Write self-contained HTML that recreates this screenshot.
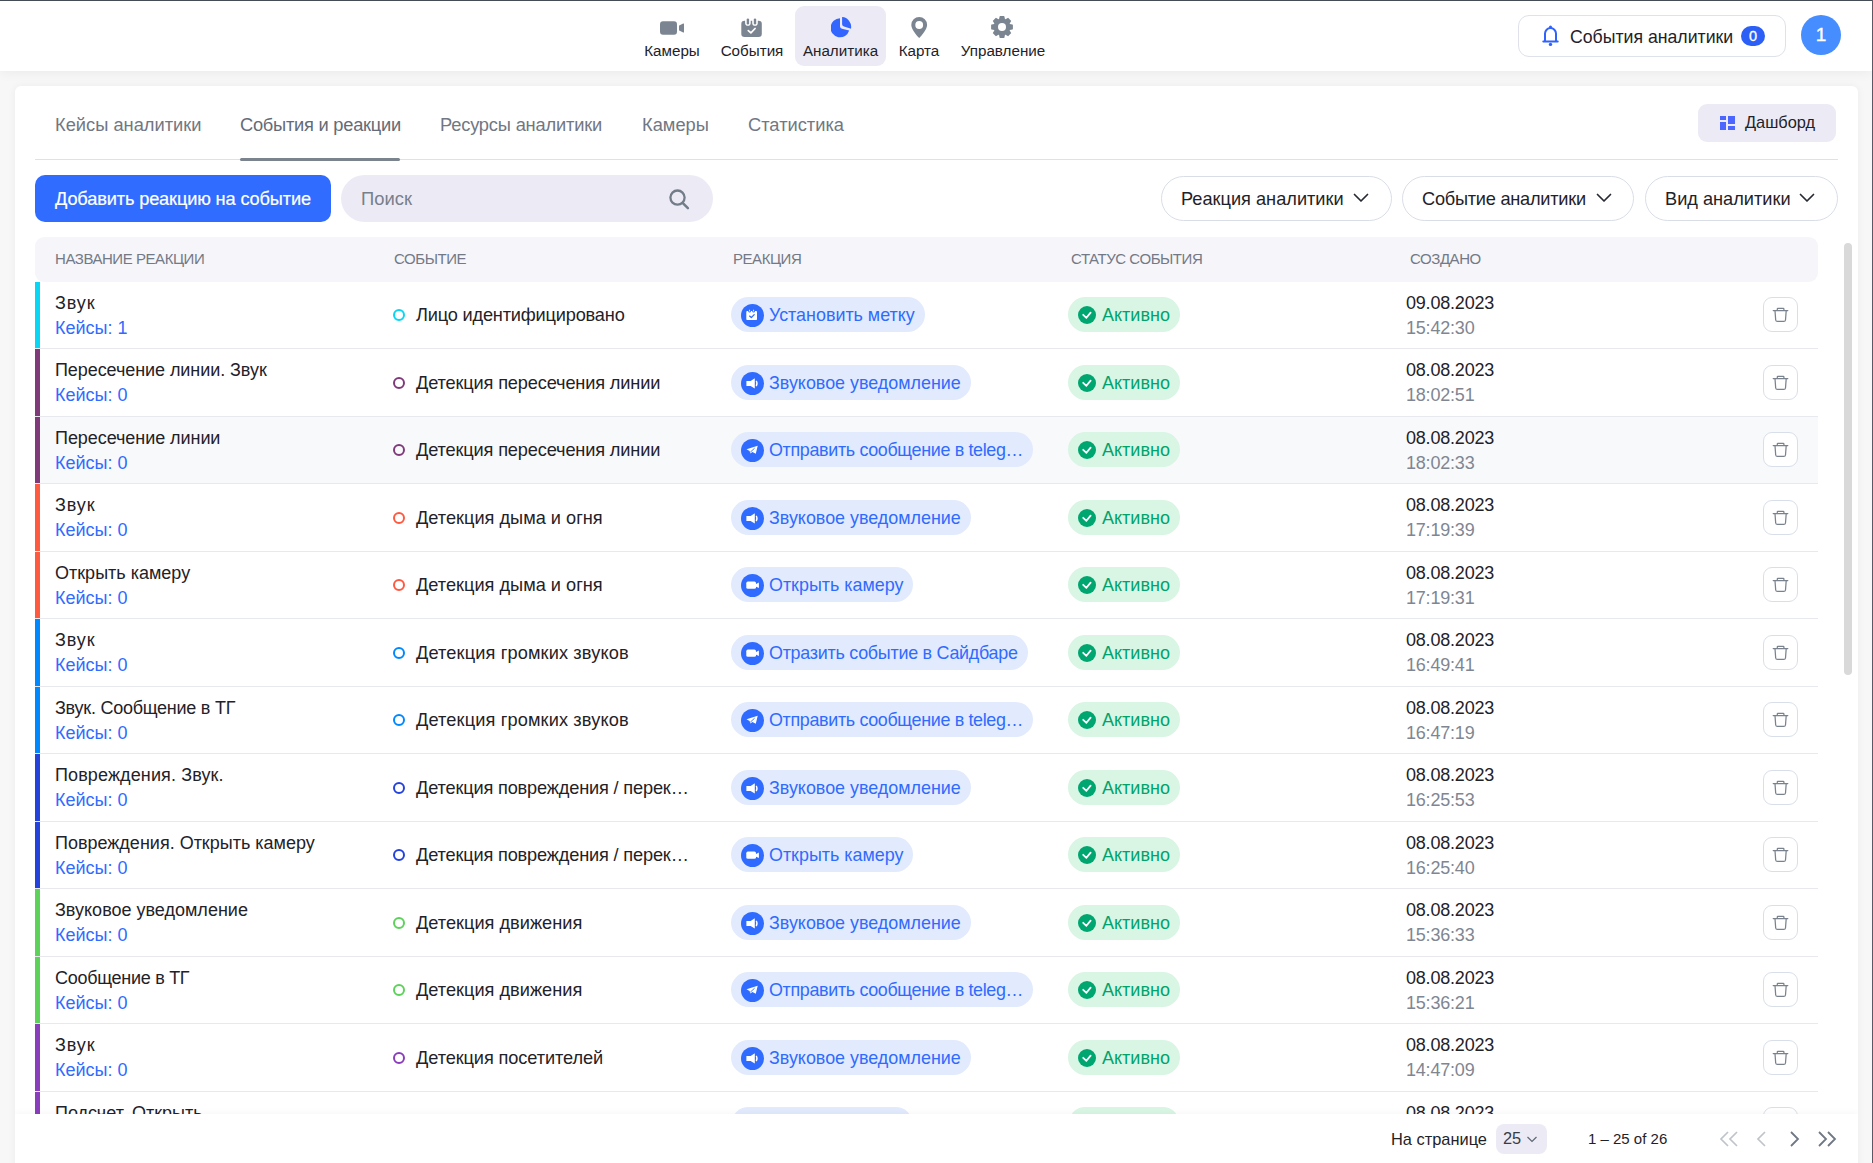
<!DOCTYPE html>
<html><head><meta charset="utf-8">
<style>
*{box-sizing:border-box;margin:0;padding:0}
html,body{width:1873px;height:1163px;overflow:hidden}
body{font-family:"Liberation Sans",sans-serif;background:#f7f7f7;color:#1f2228;position:relative}
.topline{position:absolute;left:0;top:0;width:1873px;height:1px;background:#454c55;z-index:10}
.rightline{position:absolute;right:0;top:0;width:1px;height:1163px;background:#5b5966;z-index:10}
.hdr{position:absolute;left:0;top:0;width:1872px;height:71px;background:#fff;box-shadow:0 1px 12px rgba(0,0,0,.06);z-index:3}
.nav{position:absolute;top:6px;height:60px;border-radius:9px;text-align:center;font-size:15px;color:#1f2228}
.nav svg{position:absolute}
.nav .lb{position:absolute;left:-10px;right:-10px;top:36px;line-height:17px;white-space:nowrap;font-size:15.2px}
.nav.act{background:#ecebf5}
.notif{position:absolute;left:1518px;top:15px;width:268px;height:42px;border:1px solid #dfe2ea;border-radius:11px;background:#fff}
.notif .lb{position:absolute;left:51px;top:11px;font-size:17.7px;line-height:20px;white-space:nowrap}
.badge{position:absolute;left:222px;top:10px;width:24px;height:20px;border-radius:10px;background:#2c5ff5;color:#fff;font-size:14.5px;line-height:20px;text-align:center;-webkit-text-stroke:0.3px #fff}
.avatar{position:absolute;left:1801px;top:15px;width:40px;height:40px;border-radius:50%;background:#468dff;color:#fff;font-size:19px;line-height:40px;text-align:center;-webkit-text-stroke:0.4px #fff}
.card{position:absolute;left:15px;top:86px;width:1843px;height:1090px;background:#fff;border-radius:6px;box-shadow:0 0 8px rgba(0,0,0,.05);overflow:hidden;z-index:1}
.tabs{position:absolute;left:20px;top:0;width:1803px;height:74px;border-bottom:1px solid #dde1ea}
.tab{position:absolute;top:29px;font-size:18.3px;line-height:20px;color:#717783;white-space:nowrap}
.tab.act{color:#646b77}
.uline{position:absolute;left:205px;top:72px;width:160px;height:3px;border-radius:2px;background:#7a838e}
.dash{position:absolute;left:1663px;top:18px;width:138px;height:38px;border-radius:9px;background:#ecebf5}
.dash .lb{position:absolute;left:47px;top:9px;font-size:16.4px;line-height:19px;color:#1f2228}
.addbtn{position:absolute;left:20px;top:89px;width:296px;height:47px;border-radius:10px;background:#2f6cff;color:#fff;font-size:18.2px;line-height:49px;padding-left:20px;-webkit-text-stroke:0.2px #fff;letter-spacing:-0.14px}
.search{position:absolute;left:326px;top:89px;width:372px;height:47px;border-radius:24px;background:#ecebf5}
.search .lb{position:absolute;left:20px;top:14px;font-size:18.4px;line-height:20px;color:#77808b}
.pill{position:absolute;top:90px;height:45px;border:1px solid #d9dde6;border-radius:23px;background:#fff}
.pill .lb{position:absolute;left:19px;top:12px;font-size:18.2px;line-height:20px;white-space:nowrap;color:#1f2228}
.pill svg{position:absolute;top:14px}
.thead{position:absolute;left:20px;top:151px;width:1783px;height:45px;border-radius:9px;background:#f6f5fa}
.th{position:absolute;top:13px;font-size:15px;letter-spacing:-0.45px;line-height:17px;color:#737985;white-space:nowrap}
.tbody{position:absolute;left:20px;top:196px;width:1783px}
.row{position:relative;height:67px;border-bottom:1px solid #e8e9ef;background:#fff}
.row.ev{height:68px}
.row.ev .c3,.row.ev .c4,.row.ev .del{top:16px}
.row.ev .c1,.row.ev .c5{top:9px}
.row.ev .c2{top:23px}
.row.hover{background:#f8f9fb}
.bar{position:absolute;left:0;top:0;bottom:0;width:5px}
.c1{position:absolute;left:20px;top:9px;font-size:18px;line-height:25px;white-space:nowrap}
.cs{color:#2f6bff}
.c2{position:absolute;left:358px;top:22px;font-size:18.2px;line-height:22px;white-space:nowrap}
.dot{display:inline-block;width:12px;height:12px;border-radius:50%;border:2px solid;vertical-align:top;margin-top:5px;margin-right:11px}
.c3{position:absolute;left:696px;top:15px}
.chip{display:inline-block;height:35px;border-radius:17.5px;background:#e2eafd;color:#2f6bff;font-size:17.9px;line-height:35px;padding:0 10px 0 10px;white-space:nowrap}
.chip .ci{vertical-align:top;margin-top:6.5px;margin-right:5px}
.chip>span,.st>span{position:relative;top:1px}
.c4{position:absolute;left:1033px;top:15px}
.tgx{letter-spacing:-0.33px}
.st{display:inline-block;height:35px;border-radius:17.5px;background:#d9f5e3;color:#00a36d;font-size:18px;line-height:35px;padding:0 10px 0 10px;white-space:nowrap}
.st svg{vertical-align:top;margin-top:8.5px;margin-right:6px}
.c5{position:absolute;left:1371px;top:9px;font-size:18px;line-height:25px;letter-spacing:-0.2px}
.tm{color:#7f8692}
.del{position:absolute;left:1728px;top:15px;width:35px;height:35px;border:1px solid #d9dfe8;border-radius:9px;background:#fff}
.del svg{position:absolute;left:8px;top:8px}
.foot{position:absolute;left:0;top:1028px;width:1843px;height:62px;background:#fff;box-shadow:0 -2px 6px rgba(0,0,0,.03);z-index:2}
.foot .t{position:absolute;font-size:16.4px;line-height:18px;white-space:nowrap;color:#1f2228}
.sel{position:absolute;left:1481px;top:10px;width:51px;height:30px;border-radius:8px;background:#ecebf5}
.scroll{position:absolute;left:1829px;top:157px;width:8px;height:432px;border-radius:4px;background:#d9d9d9;z-index:3}
</style></head><body>
<div class="topline"></div><div class="rightline"></div>
<div class="hdr">
  <div class="nav" style="left:640px;width:64px">
    <svg style="left:20px;top:15px" width="25" height="15" viewBox="0 0 25 15"><rect x="0" y="0.2" width="17" height="13.6" rx="3" fill="#7b8592"/><path d="M19.2 4.6L23.2 2.5Q24 2.1 24 3v8Q24 11.9 23.2 11.5L19.2 9.6Q19 9.5 19 9.2V4.9Q19 4.7 19.2 4.6z" fill="#7b8592"/></svg>
    <div class="lb">Камеры</div></div>
  <div class="nav" style="left:716px;width:72px">
    <svg style="left:25px;top:12px" width="21" height="20" viewBox="0 0 21 20"><rect x="0.3" y="2.8" width="20.5" height="16.2" rx="3.2" fill="#7b8592"/><rect x="4.1" y="-2" width="5.6" height="9.7" rx="2.8" fill="#fff"/><rect x="11.2" y="-2" width="5.6" height="9.7" rx="2.8" fill="#fff"/><rect x="5.7" y="0.4" width="2.4" height="6" rx="1.2" fill="#7b8592"/><rect x="12.8" y="0.4" width="2.4" height="6" rx="1.2" fill="#7b8592"/><path d="M7.3 12.6l2.6 2.3 4.2-4.4" stroke="#fff" stroke-width="1.7" fill="none" stroke-linecap="round" stroke-linejoin="round"/></svg>
    <div class="lb">События</div></div>
  <div class="nav act" style="left:795px;width:91px">
    <svg style="left:36px;top:11px" width="21" height="22" viewBox="0 0 21 22"><path d="M9 1.3V9.4Q9.2 11.2 11 11.8L18.2 13.5A9.5 9.5 0 1 1 9 1.3z" fill="#3366ff"/><path d="M11.1 0.1A9.8 9.8 0 0 1 20 11.7L13 9.6Q11.2 9.1 11.1 7.3z" fill="#3366ff"/></svg>
    <div class="lb">Аналитика</div></div>
  <div class="nav" style="left:893px;width:52px">
    <svg style="left:18px;top:11px" width="17" height="22" viewBox="0 0 17 22"><path d="M8.2 0A7.9 7.9 0 0 1 16.1 7.9C16.1 12 11.4 17.6 8.2 21.1C5 17.6 0.3 12 0.3 7.9A7.9 7.9 0 0 1 8.2 0z" fill="#7b8592"/><circle cx="8.2" cy="8" r="3.9" fill="#fff"/></svg>
    <div class="lb">Карта</div></div>
  <div class="nav" style="left:958px;width:90px">
    <svg style="left:32px;top:9px" width="24" height="24" viewBox="0 0 24 24"><g fill="#7b8592"><circle cx="12" cy="12" r="8.2"/><path d="M10.1 1.1H13.9Q14.3 1.1 14.4 1.6L15.3 5.5H8.7L9.6 1.6Q9.7 1.1 10.1 1.1z" transform="rotate(0 12 12)"/><path d="M10.1 1.1H13.9Q14.3 1.1 14.4 1.6L15.3 5.5H8.7L9.6 1.6Q9.7 1.1 10.1 1.1z" transform="rotate(45 12 12)"/><path d="M10.1 1.1H13.9Q14.3 1.1 14.4 1.6L15.3 5.5H8.7L9.6 1.6Q9.7 1.1 10.1 1.1z" transform="rotate(90 12 12)"/><path d="M10.1 1.1H13.9Q14.3 1.1 14.4 1.6L15.3 5.5H8.7L9.6 1.6Q9.7 1.1 10.1 1.1z" transform="rotate(135 12 12)"/><path d="M10.1 1.1H13.9Q14.3 1.1 14.4 1.6L15.3 5.5H8.7L9.6 1.6Q9.7 1.1 10.1 1.1z" transform="rotate(180 12 12)"/><path d="M10.1 1.1H13.9Q14.3 1.1 14.4 1.6L15.3 5.5H8.7L9.6 1.6Q9.7 1.1 10.1 1.1z" transform="rotate(225 12 12)"/><path d="M10.1 1.1H13.9Q14.3 1.1 14.4 1.6L15.3 5.5H8.7L9.6 1.6Q9.7 1.1 10.1 1.1z" transform="rotate(270 12 12)"/><path d="M10.1 1.1H13.9Q14.3 1.1 14.4 1.6L15.3 5.5H8.7L9.6 1.6Q9.7 1.1 10.1 1.1z" transform="rotate(315 12 12)"/></g><circle cx="12" cy="12" r="4" fill="#fff"/></svg>
    <div class="lb">Управление</div></div>
  <div class="notif">
    <svg style="position:absolute;left:23px;top:8px" width="18" height="23" viewBox="0 0 18 23"><path d="M1.3 17.5H15.7M3 17.5V9.6A5.5 5.5 0 0 1 14 9.6V17.5" stroke="#2f63ff" stroke-width="2" fill="none" stroke-linecap="round" stroke-linejoin="round"/><circle cx="8.5" cy="2.9" r="1.5" fill="#2f63ff"/><circle cx="8.5" cy="20.4" r="1.7" fill="#2f63ff"/></svg>
    <div class="lb">События аналитики</div>
    <div class="badge">0</div>
  </div>
  <div class="avatar">1</div>
</div>

<div class="card">
  <div class="tabs">
    <div class="tab" style="left:20px">Кейсы аналитики</div>
    <div class="tab act" style="left:205px;letter-spacing:-0.25px">События и реакции</div>
    <div class="tab" style="left:405px;letter-spacing:-0.19px">Ресурсы аналитики</div>
    <div class="tab" style="left:607px">Камеры</div>
    <div class="tab" style="left:713px">Статистика</div>
    <div class="uline"></div>
    <div class="dash">
      <svg style="position:absolute;left:22px;top:12px" width="15" height="14" viewBox="0 0 15 14"><rect x="0" y="0" width="6" height="4" fill="#4a66ff"/><rect x="0" y="6" width="6" height="8" fill="#4a66ff"/><rect x="8" y="0" width="7" height="8" fill="#4a66ff"/><rect x="8" y="10" width="7" height="4" fill="#4a66ff"/></svg>
      <div class="lb">Дашборд</div>
    </div>
  </div>
  <div class="addbtn">Добавить реакцию на событие</div>
  <div class="search"><div class="lb">Поиск</div>
    <svg style="position:absolute;left:326px;top:13px" width="24" height="24" viewBox="0 0 24 24"><circle cx="10.5" cy="9.6" r="7.1" stroke="#737d89" stroke-width="2.3" fill="none"/><path d="M15.6 14.8l5.3 5.3" stroke="#737d89" stroke-width="2.5" stroke-linecap="round"/></svg>
  </div>
  <div class="pill" style="left:1146px;width:231px"><div class="lb">Реакция аналитики</div>
    <svg style="left:190px" width="18" height="14" viewBox="0 0 18 14"><path d="M2.5 3.5L9 10L15.5 3.5" stroke="#262a32" stroke-width="1.7" fill="none" stroke-linecap="round" stroke-linejoin="round"/></svg></div>
  <div class="pill" style="left:1387px;width:232px"><div class="lb" style="letter-spacing:-0.25px">Событие аналитики</div>
    <svg style="left:192px" width="18" height="14" viewBox="0 0 18 14"><path d="M2.5 3.5L9 10L15.5 3.5" stroke="#262a32" stroke-width="1.7" fill="none" stroke-linecap="round" stroke-linejoin="round"/></svg></div>
  <div class="pill" style="left:1630px;width:193px"><div class="lb">Вид аналитики</div>
    <svg style="left:152px" width="18" height="14" viewBox="0 0 18 14"><path d="M2.5 3.5L9 10L15.5 3.5" stroke="#262a32" stroke-width="1.7" fill="none" stroke-linecap="round" stroke-linejoin="round"/></svg></div>

  <div class="thead">
    <div class="th" style="left:20px">НАЗВАНИЕ РЕАКЦИИ</div>
    <div class="th" style="left:359px">СОБЫТИЕ</div>
    <div class="th" style="left:698px">РЕАКЦИЯ</div>
    <div class="th" style="left:1036px">СТАТУС СОБЫТИЯ</div>
    <div class="th" style="left:1375px">СОЗДАНО</div>
  </div>
  <div class="tbody">
<div class="row"><div class="bar" style="background:#08d6f3"></div>
<div class="c1"><div class="nm" style="letter-spacing:0.9px">Звук</div><div class="cs">Кейсы: 1</div></div>
<div class="c2"><span class="dot" style="border-color:#08d6f3"></span><span class="ev" style="letter-spacing:-0.19px">Лицо идентифицировано</span></div>
<div class="c3"><span class="chip"><svg class="ci" width="23" height="23" viewBox="0 0 23 23"><circle cx="11.5" cy="11.5" r="11.5" fill="#2f6bff"/><rect x="5.3" y="7.1" width="10.7" height="9" rx="0.8" fill="#fff"/><rect x="7.3" y="5" width="2.6" height="3.6" rx="1.3" fill="#2f6bff"/><rect x="11.3" y="5" width="2.6" height="3.6" rx="1.3" fill="#2f6bff"/><rect x="8.2" y="5.6" width="0.9" height="2" rx="0.45" fill="#fff"/><rect x="12.2" y="5.6" width="0.9" height="2" rx="0.45" fill="#fff"/><path d="M8.6 12.1l1.7 1.5 2.9-3" stroke="#2f6bff" stroke-width="1.3" fill="none" stroke-linecap="round" stroke-linejoin="round"/></svg><span>Установить метку</span></span></div>
<div class="c4"><span class="st"><svg width="18" height="18" viewBox="0 0 18 18"><circle cx="9" cy="9" r="9" fill="#00a670"/><path d="M5.2 8.8l3.2 3 4.2-5.2" stroke="#fff" stroke-width="1.8" fill="none" stroke-linecap="round" stroke-linejoin="round"/></svg><span>Активно</span></span></div>
<div class="c5"><div class="dt">09.08.2023</div><div class="tm">15:42:30</div></div>
<div class="del"><svg width="18" height="18" viewBox="0 0 18 18"><path d="M1.2 4.6H15.8M5.3 4.5V3Q5.3 2.4 5.9 2.4H11.3Q11.9 2.4 11.9 3V4.5M3 4.8L3.7 14Q3.9 15.4 5.4 15.4H11.8Q13.3 15.4 13.5 14L14.2 4.8" stroke="#7a828e" stroke-width="1.25" fill="none" stroke-linejoin="round" stroke-linecap="round"/></svg></div>
</div>
<div class="row ev"><div class="bar" style="background:#7f3a7a"></div>
<div class="c1"><div class="nm" style="letter-spacing:-0.07px">Пересечение линии. Звук</div><div class="cs">Кейсы: 0</div></div>
<div class="c2"><span class="dot" style="border-color:#7f3a7a"></span><span class="ev" style="letter-spacing:-0.15px">Детекция пересечения линии</span></div>
<div class="c3"><span class="chip"><svg class="ci" width="23" height="23" viewBox="0 0 23 23"><circle cx="11.5" cy="11.5" r="11.5" fill="#2f6bff"/><path d="M5.4 9H9.6L13.8 6.2V16.6L9.6 13.9H5.4z" fill="#fff"/><path d="M15.2 8.9q1.7 2.6 0 5.2" stroke="#fff" stroke-width="1.3" fill="none"/></svg><span>Звуковое уведомление</span></span></div>
<div class="c4"><span class="st"><svg width="18" height="18" viewBox="0 0 18 18"><circle cx="9" cy="9" r="9" fill="#00a670"/><path d="M5.2 8.8l3.2 3 4.2-5.2" stroke="#fff" stroke-width="1.8" fill="none" stroke-linecap="round" stroke-linejoin="round"/></svg><span>Активно</span></span></div>
<div class="c5"><div class="dt">08.08.2023</div><div class="tm">18:02:51</div></div>
<div class="del"><svg width="18" height="18" viewBox="0 0 18 18"><path d="M1.2 4.6H15.8M5.3 4.5V3Q5.3 2.4 5.9 2.4H11.3Q11.9 2.4 11.9 3V4.5M3 4.8L3.7 14Q3.9 15.4 5.4 15.4H11.8Q13.3 15.4 13.5 14L14.2 4.8" stroke="#7a828e" stroke-width="1.25" fill="none" stroke-linejoin="round" stroke-linecap="round"/></svg></div>
</div>
<div class="row hover"><div class="bar" style="background:#7f3a7a"></div>
<div class="c1"><div class="nm" style="letter-spacing:-0.06px">Пересечение линии</div><div class="cs">Кейсы: 0</div></div>
<div class="c2"><span class="dot" style="border-color:#7f3a7a"></span><span class="ev" style="letter-spacing:-0.15px">Детекция пересечения линии</span></div>
<div class="c3"><span class="chip"><svg class="ci" width="23" height="23" viewBox="0 0 23 23"><circle cx="11.5" cy="11.5" r="11.5" fill="#2f6bff"/><path d="M5.5 10.2L16.7 6.7L14.8 14.7L11.4 13.1L9.3 14.6L8.6 12z" fill="#fff"/><path d="M9.3 13.2L13.6 9.2" stroke="#2f6bff" stroke-width="0.9"/></svg><span class="tgx">Отправить сообщение в teleg…</span></span></div>
<div class="c4"><span class="st"><svg width="18" height="18" viewBox="0 0 18 18"><circle cx="9" cy="9" r="9" fill="#00a670"/><path d="M5.2 8.8l3.2 3 4.2-5.2" stroke="#fff" stroke-width="1.8" fill="none" stroke-linecap="round" stroke-linejoin="round"/></svg><span>Активно</span></span></div>
<div class="c5"><div class="dt">08.08.2023</div><div class="tm">18:02:33</div></div>
<div class="del"><svg width="18" height="18" viewBox="0 0 18 18"><path d="M1.2 4.6H15.8M5.3 4.5V3Q5.3 2.4 5.9 2.4H11.3Q11.9 2.4 11.9 3V4.5M3 4.8L3.7 14Q3.9 15.4 5.4 15.4H11.8Q13.3 15.4 13.5 14L14.2 4.8" stroke="#7a828e" stroke-width="1.25" fill="none" stroke-linejoin="round" stroke-linecap="round"/></svg></div>
</div>
<div class="row ev"><div class="bar" style="background:#ff5940"></div>
<div class="c1"><div class="nm" style="letter-spacing:0.9px">Звук</div><div class="cs">Кейсы: 0</div></div>
<div class="c2"><span class="dot" style="border-color:#ff5940"></span><span class="ev">Детекция дыма и огня</span></div>
<div class="c3"><span class="chip"><svg class="ci" width="23" height="23" viewBox="0 0 23 23"><circle cx="11.5" cy="11.5" r="11.5" fill="#2f6bff"/><path d="M5.4 9H9.6L13.8 6.2V16.6L9.6 13.9H5.4z" fill="#fff"/><path d="M15.2 8.9q1.7 2.6 0 5.2" stroke="#fff" stroke-width="1.3" fill="none"/></svg><span>Звуковое уведомление</span></span></div>
<div class="c4"><span class="st"><svg width="18" height="18" viewBox="0 0 18 18"><circle cx="9" cy="9" r="9" fill="#00a670"/><path d="M5.2 8.8l3.2 3 4.2-5.2" stroke="#fff" stroke-width="1.8" fill="none" stroke-linecap="round" stroke-linejoin="round"/></svg><span>Активно</span></span></div>
<div class="c5"><div class="dt">08.08.2023</div><div class="tm">17:19:39</div></div>
<div class="del"><svg width="18" height="18" viewBox="0 0 18 18"><path d="M1.2 4.6H15.8M5.3 4.5V3Q5.3 2.4 5.9 2.4H11.3Q11.9 2.4 11.9 3V4.5M3 4.8L3.7 14Q3.9 15.4 5.4 15.4H11.8Q13.3 15.4 13.5 14L14.2 4.8" stroke="#7a828e" stroke-width="1.25" fill="none" stroke-linejoin="round" stroke-linecap="round"/></svg></div>
</div>
<div class="row"><div class="bar" style="background:#ff5940"></div>
<div class="c1"><div class="nm">Открыть камеру</div><div class="cs">Кейсы: 0</div></div>
<div class="c2"><span class="dot" style="border-color:#ff5940"></span><span class="ev">Детекция дыма и огня</span></div>
<div class="c3"><span class="chip"><svg class="ci" width="23" height="23" viewBox="0 0 23 23"><circle cx="11.5" cy="11.5" r="11.5" fill="#2f6bff"/><rect x="5.3" y="7.6" width="9.7" height="7.2" rx="1.6" fill="#fff"/><path d="M14.6 10.2L17.9 8.6V13.9L14.6 12.4z" fill="#fff"/></svg><span>Открыть камеру</span></span></div>
<div class="c4"><span class="st"><svg width="18" height="18" viewBox="0 0 18 18"><circle cx="9" cy="9" r="9" fill="#00a670"/><path d="M5.2 8.8l3.2 3 4.2-5.2" stroke="#fff" stroke-width="1.8" fill="none" stroke-linecap="round" stroke-linejoin="round"/></svg><span>Активно</span></span></div>
<div class="c5"><div class="dt">08.08.2023</div><div class="tm">17:19:31</div></div>
<div class="del"><svg width="18" height="18" viewBox="0 0 18 18"><path d="M1.2 4.6H15.8M5.3 4.5V3Q5.3 2.4 5.9 2.4H11.3Q11.9 2.4 11.9 3V4.5M3 4.8L3.7 14Q3.9 15.4 5.4 15.4H11.8Q13.3 15.4 13.5 14L14.2 4.8" stroke="#7a828e" stroke-width="1.25" fill="none" stroke-linejoin="round" stroke-linecap="round"/></svg></div>
</div>
<div class="row ev"><div class="bar" style="background:#0088ff"></div>
<div class="c1"><div class="nm" style="letter-spacing:0.9px">Звук</div><div class="cs">Кейсы: 0</div></div>
<div class="c2"><span class="dot" style="border-color:#0088ff"></span><span class="ev" style="letter-spacing:0.13px">Детекция громких звуков</span></div>
<div class="c3"><span class="chip"><svg class="ci" width="23" height="23" viewBox="0 0 23 23"><circle cx="11.5" cy="11.5" r="11.5" fill="#2f6bff"/><rect x="5.3" y="7.6" width="9.7" height="7.2" rx="1.6" fill="#fff"/><path d="M14.6 10.2L17.9 8.6V13.9L14.6 12.4z" fill="#fff"/></svg><span style="letter-spacing:-0.25px">Отразить событие в Сайдбаре</span></span></div>
<div class="c4"><span class="st"><svg width="18" height="18" viewBox="0 0 18 18"><circle cx="9" cy="9" r="9" fill="#00a670"/><path d="M5.2 8.8l3.2 3 4.2-5.2" stroke="#fff" stroke-width="1.8" fill="none" stroke-linecap="round" stroke-linejoin="round"/></svg><span>Активно</span></span></div>
<div class="c5"><div class="dt">08.08.2023</div><div class="tm">16:49:41</div></div>
<div class="del"><svg width="18" height="18" viewBox="0 0 18 18"><path d="M1.2 4.6H15.8M5.3 4.5V3Q5.3 2.4 5.9 2.4H11.3Q11.9 2.4 11.9 3V4.5M3 4.8L3.7 14Q3.9 15.4 5.4 15.4H11.8Q13.3 15.4 13.5 14L14.2 4.8" stroke="#7a828e" stroke-width="1.25" fill="none" stroke-linejoin="round" stroke-linecap="round"/></svg></div>
</div>
<div class="row"><div class="bar" style="background:#0088ff"></div>
<div class="c1"><div class="nm" style="letter-spacing:-0.25px">Звук. Сообщение в ТГ</div><div class="cs">Кейсы: 0</div></div>
<div class="c2"><span class="dot" style="border-color:#0088ff"></span><span class="ev" style="letter-spacing:0.13px">Детекция громких звуков</span></div>
<div class="c3"><span class="chip"><svg class="ci" width="23" height="23" viewBox="0 0 23 23"><circle cx="11.5" cy="11.5" r="11.5" fill="#2f6bff"/><path d="M5.5 10.2L16.7 6.7L14.8 14.7L11.4 13.1L9.3 14.6L8.6 12z" fill="#fff"/><path d="M9.3 13.2L13.6 9.2" stroke="#2f6bff" stroke-width="0.9"/></svg><span class="tgx">Отправить сообщение в teleg…</span></span></div>
<div class="c4"><span class="st"><svg width="18" height="18" viewBox="0 0 18 18"><circle cx="9" cy="9" r="9" fill="#00a670"/><path d="M5.2 8.8l3.2 3 4.2-5.2" stroke="#fff" stroke-width="1.8" fill="none" stroke-linecap="round" stroke-linejoin="round"/></svg><span>Активно</span></span></div>
<div class="c5"><div class="dt">08.08.2023</div><div class="tm">16:47:19</div></div>
<div class="del"><svg width="18" height="18" viewBox="0 0 18 18"><path d="M1.2 4.6H15.8M5.3 4.5V3Q5.3 2.4 5.9 2.4H11.3Q11.9 2.4 11.9 3V4.5M3 4.8L3.7 14Q3.9 15.4 5.4 15.4H11.8Q13.3 15.4 13.5 14L14.2 4.8" stroke="#7a828e" stroke-width="1.25" fill="none" stroke-linejoin="round" stroke-linecap="round"/></svg></div>
</div>
<div class="row ev"><div class="bar" style="background:#2443dd"></div>
<div class="c1"><div class="nm" style="letter-spacing:0.12px">Повреждения. Звук.</div><div class="cs">Кейсы: 0</div></div>
<div class="c2"><span class="dot" style="border-color:#2443dd"></span><span class="ev" style="letter-spacing:-0.17px">Детекция повреждения / перек…</span></div>
<div class="c3"><span class="chip"><svg class="ci" width="23" height="23" viewBox="0 0 23 23"><circle cx="11.5" cy="11.5" r="11.5" fill="#2f6bff"/><path d="M5.4 9H9.6L13.8 6.2V16.6L9.6 13.9H5.4z" fill="#fff"/><path d="M15.2 8.9q1.7 2.6 0 5.2" stroke="#fff" stroke-width="1.3" fill="none"/></svg><span>Звуковое уведомление</span></span></div>
<div class="c4"><span class="st"><svg width="18" height="18" viewBox="0 0 18 18"><circle cx="9" cy="9" r="9" fill="#00a670"/><path d="M5.2 8.8l3.2 3 4.2-5.2" stroke="#fff" stroke-width="1.8" fill="none" stroke-linecap="round" stroke-linejoin="round"/></svg><span>Активно</span></span></div>
<div class="c5"><div class="dt">08.08.2023</div><div class="tm">16:25:53</div></div>
<div class="del"><svg width="18" height="18" viewBox="0 0 18 18"><path d="M1.2 4.6H15.8M5.3 4.5V3Q5.3 2.4 5.9 2.4H11.3Q11.9 2.4 11.9 3V4.5M3 4.8L3.7 14Q3.9 15.4 5.4 15.4H11.8Q13.3 15.4 13.5 14L14.2 4.8" stroke="#7a828e" stroke-width="1.25" fill="none" stroke-linejoin="round" stroke-linecap="round"/></svg></div>
</div>
<div class="row"><div class="bar" style="background:#2443dd"></div>
<div class="c1"><div class="nm">Повреждения. Открыть камеру</div><div class="cs">Кейсы: 0</div></div>
<div class="c2"><span class="dot" style="border-color:#2443dd"></span><span class="ev" style="letter-spacing:-0.17px">Детекция повреждения / перек…</span></div>
<div class="c3"><span class="chip"><svg class="ci" width="23" height="23" viewBox="0 0 23 23"><circle cx="11.5" cy="11.5" r="11.5" fill="#2f6bff"/><rect x="5.3" y="7.6" width="9.7" height="7.2" rx="1.6" fill="#fff"/><path d="M14.6 10.2L17.9 8.6V13.9L14.6 12.4z" fill="#fff"/></svg><span>Открыть камеру</span></span></div>
<div class="c4"><span class="st"><svg width="18" height="18" viewBox="0 0 18 18"><circle cx="9" cy="9" r="9" fill="#00a670"/><path d="M5.2 8.8l3.2 3 4.2-5.2" stroke="#fff" stroke-width="1.8" fill="none" stroke-linecap="round" stroke-linejoin="round"/></svg><span>Активно</span></span></div>
<div class="c5"><div class="dt">08.08.2023</div><div class="tm">16:25:40</div></div>
<div class="del"><svg width="18" height="18" viewBox="0 0 18 18"><path d="M1.2 4.6H15.8M5.3 4.5V3Q5.3 2.4 5.9 2.4H11.3Q11.9 2.4 11.9 3V4.5M3 4.8L3.7 14Q3.9 15.4 5.4 15.4H11.8Q13.3 15.4 13.5 14L14.2 4.8" stroke="#7a828e" stroke-width="1.25" fill="none" stroke-linejoin="round" stroke-linecap="round"/></svg></div>
</div>
<div class="row ev"><div class="bar" style="background:#5cd25a"></div>
<div class="c1"><div class="nm">Звуковое уведомление</div><div class="cs">Кейсы: 0</div></div>
<div class="c2"><span class="dot" style="border-color:#5cd25a"></span><span class="ev">Детекция движения</span></div>
<div class="c3"><span class="chip"><svg class="ci" width="23" height="23" viewBox="0 0 23 23"><circle cx="11.5" cy="11.5" r="11.5" fill="#2f6bff"/><path d="M5.4 9H9.6L13.8 6.2V16.6L9.6 13.9H5.4z" fill="#fff"/><path d="M15.2 8.9q1.7 2.6 0 5.2" stroke="#fff" stroke-width="1.3" fill="none"/></svg><span>Звуковое уведомление</span></span></div>
<div class="c4"><span class="st"><svg width="18" height="18" viewBox="0 0 18 18"><circle cx="9" cy="9" r="9" fill="#00a670"/><path d="M5.2 8.8l3.2 3 4.2-5.2" stroke="#fff" stroke-width="1.8" fill="none" stroke-linecap="round" stroke-linejoin="round"/></svg><span>Активно</span></span></div>
<div class="c5"><div class="dt">08.08.2023</div><div class="tm">15:36:33</div></div>
<div class="del"><svg width="18" height="18" viewBox="0 0 18 18"><path d="M1.2 4.6H15.8M5.3 4.5V3Q5.3 2.4 5.9 2.4H11.3Q11.9 2.4 11.9 3V4.5M3 4.8L3.7 14Q3.9 15.4 5.4 15.4H11.8Q13.3 15.4 13.5 14L14.2 4.8" stroke="#7a828e" stroke-width="1.25" fill="none" stroke-linejoin="round" stroke-linecap="round"/></svg></div>
</div>
<div class="row"><div class="bar" style="background:#5cd25a"></div>
<div class="c1"><div class="nm" style="letter-spacing:-0.28px">Сообщение в ТГ</div><div class="cs">Кейсы: 0</div></div>
<div class="c2"><span class="dot" style="border-color:#5cd25a"></span><span class="ev">Детекция движения</span></div>
<div class="c3"><span class="chip"><svg class="ci" width="23" height="23" viewBox="0 0 23 23"><circle cx="11.5" cy="11.5" r="11.5" fill="#2f6bff"/><path d="M5.5 10.2L16.7 6.7L14.8 14.7L11.4 13.1L9.3 14.6L8.6 12z" fill="#fff"/><path d="M9.3 13.2L13.6 9.2" stroke="#2f6bff" stroke-width="0.9"/></svg><span class="tgx">Отправить сообщение в teleg…</span></span></div>
<div class="c4"><span class="st"><svg width="18" height="18" viewBox="0 0 18 18"><circle cx="9" cy="9" r="9" fill="#00a670"/><path d="M5.2 8.8l3.2 3 4.2-5.2" stroke="#fff" stroke-width="1.8" fill="none" stroke-linecap="round" stroke-linejoin="round"/></svg><span>Активно</span></span></div>
<div class="c5"><div class="dt">08.08.2023</div><div class="tm">15:36:21</div></div>
<div class="del"><svg width="18" height="18" viewBox="0 0 18 18"><path d="M1.2 4.6H15.8M5.3 4.5V3Q5.3 2.4 5.9 2.4H11.3Q11.9 2.4 11.9 3V4.5M3 4.8L3.7 14Q3.9 15.4 5.4 15.4H11.8Q13.3 15.4 13.5 14L14.2 4.8" stroke="#7a828e" stroke-width="1.25" fill="none" stroke-linejoin="round" stroke-linecap="round"/></svg></div>
</div>
<div class="row ev"><div class="bar" style="background:#8a3ebd"></div>
<div class="c1"><div class="nm" style="letter-spacing:0.9px">Звук</div><div class="cs">Кейсы: 0</div></div>
<div class="c2"><span class="dot" style="border-color:#8a3ebd"></span><span class="ev" style="letter-spacing:-0.1px">Детекция посетителей</span></div>
<div class="c3"><span class="chip"><svg class="ci" width="23" height="23" viewBox="0 0 23 23"><circle cx="11.5" cy="11.5" r="11.5" fill="#2f6bff"/><path d="M5.4 9H9.6L13.8 6.2V16.6L9.6 13.9H5.4z" fill="#fff"/><path d="M15.2 8.9q1.7 2.6 0 5.2" stroke="#fff" stroke-width="1.3" fill="none"/></svg><span>Звуковое уведомление</span></span></div>
<div class="c4"><span class="st"><svg width="18" height="18" viewBox="0 0 18 18"><circle cx="9" cy="9" r="9" fill="#00a670"/><path d="M5.2 8.8l3.2 3 4.2-5.2" stroke="#fff" stroke-width="1.8" fill="none" stroke-linecap="round" stroke-linejoin="round"/></svg><span>Активно</span></span></div>
<div class="c5"><div class="dt">08.08.2023</div><div class="tm">14:47:09</div></div>
<div class="del"><svg width="18" height="18" viewBox="0 0 18 18"><path d="M1.2 4.6H15.8M5.3 4.5V3Q5.3 2.4 5.9 2.4H11.3Q11.9 2.4 11.9 3V4.5M3 4.8L3.7 14Q3.9 15.4 5.4 15.4H11.8Q13.3 15.4 13.5 14L14.2 4.8" stroke="#7a828e" stroke-width="1.25" fill="none" stroke-linejoin="round" stroke-linecap="round"/></svg></div>
</div>
<div class="row"><div class="bar" style="background:#8a3ebd"></div>
<div class="c1"><div class="nm">Подсчет. Открыть</div><div class="cs">Кейсы: 0</div></div>
<div class="c2"><span class="dot" style="border-color:#8a3ebd"></span><span class="ev">Подсчет посетителей</span></div>
<div class="c3"><span class="chip"><svg class="ci" width="23" height="23" viewBox="0 0 23 23"><circle cx="11.5" cy="11.5" r="11.5" fill="#2f6bff"/><rect x="5.3" y="7.6" width="9.7" height="7.2" rx="1.6" fill="#fff"/><path d="M14.6 10.2L17.9 8.6V13.9L14.6 12.4z" fill="#fff"/></svg><span>Открыть камеру</span></span></div>
<div class="c4"><span class="st"><svg width="18" height="18" viewBox="0 0 18 18"><circle cx="9" cy="9" r="9" fill="#00a670"/><path d="M5.2 8.8l3.2 3 4.2-5.2" stroke="#fff" stroke-width="1.8" fill="none" stroke-linecap="round" stroke-linejoin="round"/></svg><span>Активно</span></span></div>
<div class="c5"><div class="dt">08.08.2023</div><div class="tm">14:40:02</div></div>
<div class="del"><svg width="18" height="18" viewBox="0 0 18 18"><path d="M1.2 4.6H15.8M5.3 4.5V3Q5.3 2.4 5.9 2.4H11.3Q11.9 2.4 11.9 3V4.5M3 4.8L3.7 14Q3.9 15.4 5.4 15.4H11.8Q13.3 15.4 13.5 14L14.2 4.8" stroke="#7a828e" stroke-width="1.25" fill="none" stroke-linejoin="round" stroke-linecap="round"/></svg></div>
</div>
  </div>
  <div class="scroll"></div>
  <div class="foot">
    <div class="t" style="left:1376px;top:16px">На странице</div>
    <div class="sel"><div class="t" style="left:7px;top:5px;color:#383d45">25</div>
      <svg style="position:absolute;left:30px;top:10px" width="12" height="10" viewBox="0 0 12 10"><path d="M1.5 3l4.5 4.5 4.5-4.5" stroke="#5f6672" stroke-width="1.2" fill="none"/></svg></div>
    <div class="t" style="left:1573px;top:16px;font-size:15px">1 – 25 of 26</div>
    <svg style="position:absolute;left:1703px;top:16px" width="22" height="18" viewBox="0 0 22 18"><path d="M10 2L3 9l7 7M19 2l-7 7 7 7" stroke="#bfc4cb" stroke-width="1.7" fill="none"/></svg>
    <svg style="position:absolute;left:1740px;top:16px" width="14" height="18" viewBox="0 0 14 18"><path d="M10 2L3 9l7 7" stroke="#bfc4cb" stroke-width="1.7" fill="none"/></svg>
    <svg style="position:absolute;left:1773px;top:16px" width="14" height="18" viewBox="0 0 14 18"><path d="M3 2l7 7-7 7" stroke="#6f7782" stroke-width="1.8" fill="none"/></svg>
    <svg style="position:absolute;left:1801px;top:16px" width="22" height="18" viewBox="0 0 22 18"><path d="M3 2l7 7-7 7M12 2l7 7-7 7" stroke="#6f7782" stroke-width="1.8" fill="none"/></svg>
  </div>
</div>
</body></html>
